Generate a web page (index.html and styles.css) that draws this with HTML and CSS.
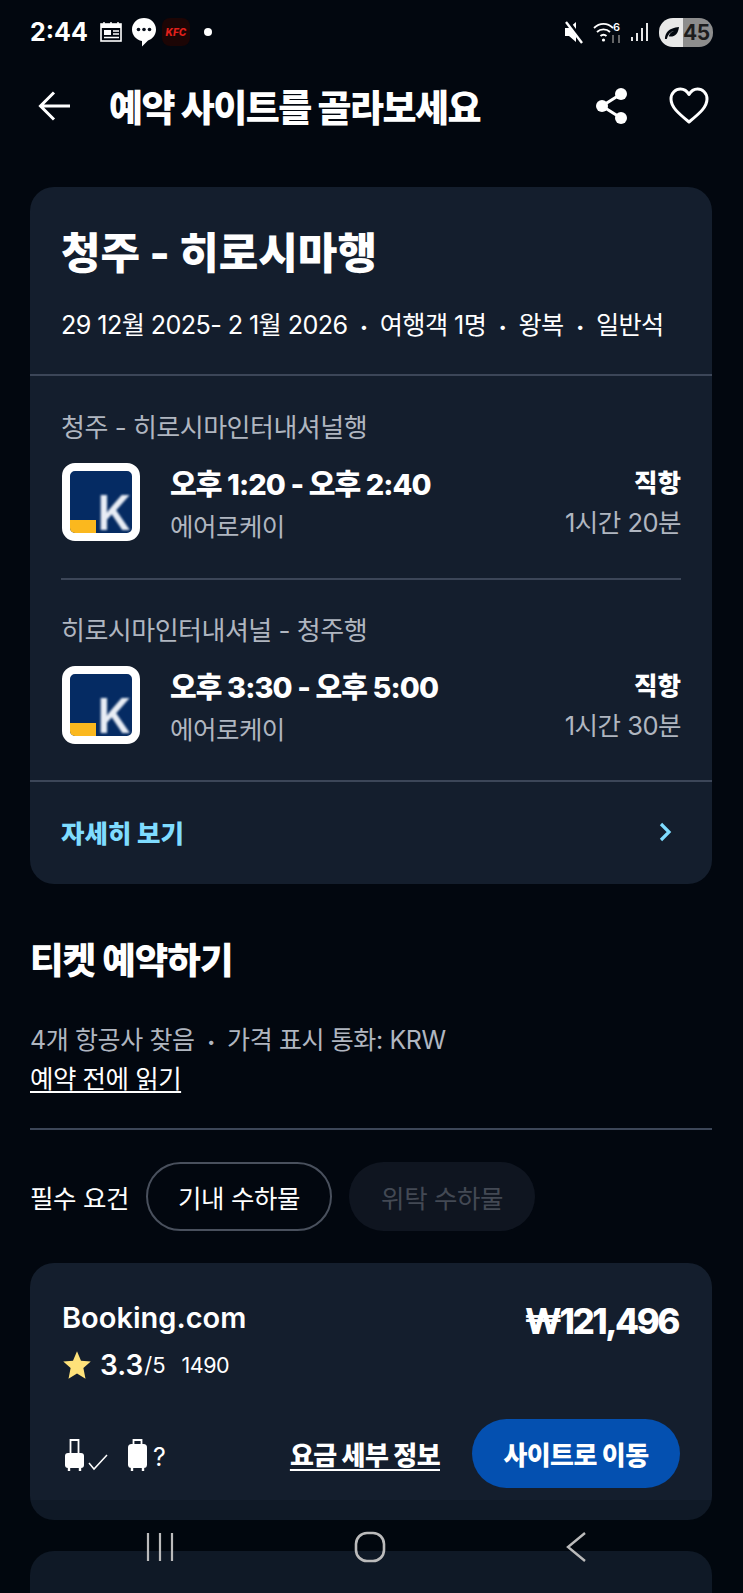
FILE: index.html
```html
<!DOCTYPE html>
<html lang="ko">
<head>
  <meta charset="utf-8">
  <title>예약 사이트를 골라보세요</title>
  <link rel="stylesheet" href="styles.css">
</head>
<body>
  <div class="screen">
    <div class="status-bar">
      <div class="status-left">
        <span class="clock">2:44</span>
        <svg class="ic-news" width="24" height="22" viewBox="0 0 24 22"><rect x="2" y="3" width="20" height="17" fill="none" stroke="#fff" stroke-width="1.6"/><rect x="2" y="3" width="20" height="4" fill="#fff"/><path d="M5 1v3M12 1v3M19 1v3" stroke="#fff" stroke-width="1.400"/><rect x="5" y="9" width="7" height="5" fill="#fff"/><path d="M14 10h6M14 13h6M5 16.500h15" stroke="#fff" stroke-width="1.400"/></svg>
        <svg class="ic-talk" width="26" height="34" viewBox="0 0 26 34"><path d="M13 3c6.500 0 12 4.800 12 11.500 0 5.500-3.500 9.500-8 11l-6 6v-5.500C5 25 1 20 1 14.500 1 7.800 6.500 3 13 3z" fill="#fff"/><circle cx="7.500" cy="14.500" r="1.800" fill="#0a101c"/><circle cx="13" cy="14.500" r="1.800" fill="#0a101c"/><circle cx="18.500" cy="14.500" r="1.800" fill="#0a101c"/></svg>
        <span class="kfc">KFC</span>
        <span class="dot"></span>
      </div>
      <div class="status-right">
        <svg class="ic-mute" width="22" height="26" viewBox="0 0 22 26"><path d="M2 9h4l7-6v20l-7-6H2z" fill="#fff"/><path d="M5 3l15 20" stroke="#02070f" stroke-width="4.500"/><path d="M3 3l16 21" stroke="#fff" stroke-width="2.400"/></svg>
        <svg width="32" height="28" viewBox="0 0 32 28"><path d="M1 10c5.500-5.500 13.500-5.500 19 0M4 14c3.500-3.500 9.500-3.500 13 0M7.500 18c1.700-1.700 4.300-1.700 6 0" fill="none" stroke="#fff" stroke-width="1.800"/><circle cx="10.500" cy="22" r="1.600" fill="#fff"/><path d="M20 17v8M26 25v-8" stroke="#7d7d7d" stroke-width="1.600"/><text x="20" y="13" class="wifi-six">6</text></svg>
        <svg width="20" height="22" viewBox="0 0 20 22"><path d="M2 16v4M7 12v8M12 7v13M17 2v18" stroke="#e8e8e8" stroke-width="2"/></svg>
        <div class="battery">
          <svg width="17" height="15" viewBox="0 0 18 16"><path d="M2 15c0-7 4-12 15-13-1 8-5 11-11 10 1-3 3-5 6-6-4 1-7 4-8 9z" fill="#02070f"/></svg>
          <span>45</span>
        </div>
      </div>
    </div>

    <header class="app-bar">
      <svg width="36" height="36" viewBox="0 0 36 36"><path d="M33 18H4M17 4.500L3.500 18 17 31.500" fill="none" stroke="#fff" stroke-width="3"/></svg>
      <h1>예약 사이트를 골라보세요</h1>
      <svg class="ic-share" width="36" height="38" viewBox="0 0 36 38"><circle cx="27" cy="7" r="6" fill="#fff"/><circle cx="8" cy="19" r="6" fill="#fff"/><circle cx="27" cy="31" r="6" fill="#fff"/><path d="M27 7L8 19l19 12" fill="none" stroke="#fff" stroke-width="3"/></svg>
      <svg class="ic-heart" width="40" height="38" viewBox="0 0 40 38"><path d="M20 35C9 26 2 20 2 12 2 6 6.500 2 11.500 2c3.500 0 6.500 2 8.500 5.500C22 4 25 2 28.500 2 33.500 2 38 6 38 12c0 8-7 14-18 23z" fill="none" stroke="#fff" stroke-width="3" stroke-linejoin="round"/></svg>
    </header>

    <main class="content">
      <section class="card trip">
        <div class="trip-head">
          <h2>청주 - 히로시마행</h2>
          <p class="trip-meta">
            <span>29 12월 2025- 2 1월 2026</span><span class="sep">•</span><span>여행객 1명</span><span class="sep">•</span><span>왕복</span><span class="sep">•</span><span>일반석</span>
          </p>
        </div>
        <div class="legs">
          <div class="leg leg-out">
            <div class="leg-name">청주 - 히로시마인터내셔널행</div>
            <div class="leg-row">
              <div class="airline-logo"><span class="logo-bar"></span><span class="logo-k">K</span></div>
              <div class="leg-info">
                <div class="leg-time">오후 1:20 - 오후 2:40</div>
                <div class="leg-sub">에어로케이</div>
              </div>
              <div class="leg-stop">
                <div class="leg-direct">직항</div>
                <div class="leg-sub">1시간 20분</div>
              </div>
            </div>
          </div>
          <div class="leg leg-back">
            <div class="leg-name">히로시마인터내셔널 - 청주행</div>
            <div class="leg-row">
              <div class="airline-logo"><span class="logo-bar"></span><span class="logo-k">K</span></div>
              <div class="leg-info">
                <div class="leg-time">오후 3:30 - 오후 5:00</div>
                <div class="leg-sub">에어로케이</div>
              </div>
              <div class="leg-stop">
                <div class="leg-direct">직항</div>
                <div class="leg-sub">1시간 30분</div>
              </div>
            </div>
          </div>
        </div>
        <div class="trip-more">
          <span>자세히 보기</span>
          <svg width="16" height="22" viewBox="0 0 16 22"><path d="M3 3l8 8-8 8" fill="none" stroke="#7fdcff" stroke-width="3.200"/></svg>
        </div>
      </section>

      <section class="booking">
        <h2>티켓 예약하기</h2>
        <p class="found">4개 항공사 찾음<span class="sep">•</span>가격 표시 통화: KRW</p>
        <a class="read-first">예약 전에 읽기</a>
      </section>

      <div class="filters">
        <span class="filter-label">필수 요건</span>
        <span class="chip">기내 수하물</span>
        <span class="chip chip-off">위탁 수하물</span>
      </div>

      <section class="card offer">
        <div class="offer-top">
          <div>
            <div class="offer-name">Booking.com</div>
            <div class="offer-rating">
              <svg width="30" height="30" viewBox="0 0 24 24"><path d="M12 1l3.200 7.500 7.800.7-5.900 5.200L18.800 23 12 18.800 5.200 23l1.700-8.600L1 9.200l7.800-.7z" fill="#ffe27a"/></svg>
              <b>3.3</b><span class="out-of">/5</span><span class="count">1490</span>
            </div>
          </div>
          <div class="offer-price">₩121,496</div>
        </div>
        <div class="offer-bottom">
          <div class="bags">
            <svg width="46" height="34" viewBox="0 0 46 34"><path d="M7.500 15V2h8v13" fill="none" stroke="#fff" stroke-width="1.800"/><rect x="2" y="15" width="19" height="15" rx="3" fill="#fff"/><path d="M6 29v4M17 29v4" stroke="#fff" stroke-width="2.400"/><path d="M26 25l5 6 13-14" fill="none" stroke="#fff" stroke-width="1.500"/></svg>
            <div class="bag-item">
              <svg width="21" height="34" viewBox="0 0 21 34"><path d="M6.500 6V2h8v4" fill="none" stroke="#fff" stroke-width="1.800"/><rect x="1" y="6" width="19" height="24" rx="3.500" fill="#fff"/><path d="M5 29v4M16 29v4" stroke="#fff" stroke-width="2.400"/></svg>
              <span class="bag-unknown">?</span>
            </div>
          </div>
          <a class="fare-link">요금 세부 정보</a>
          <span class="go-btn">사이트로 이동</span>
        </div>
      </section>

      <section class="card offer-next"></section>
    </main>

    <nav class="nav-bar">
      <svg width="28" height="30" viewBox="0 0 28 30"><path d="M2 1v28M14 1v28M26 1v28" stroke="#bbb" stroke-width="2.200"/></svg>
      <svg width="32" height="32" viewBox="0 0 32 32"><rect x="2" y="2" width="28" height="28" rx="11" fill="none" stroke="#bbb" stroke-width="2.600"/></svg>
      <svg width="22" height="32" viewBox="0 0 22 32"><path d="M20 2L3 16l17 14" fill="none" stroke="#bbb" stroke-width="2.400"/></svg>
    </nav>
  </div>
</body>
</html>
```

FILE: styles.css
```css
* {
  box-sizing: border-box;
}

html, body {
  margin: 0;
  padding: 0;
  background: #02070f;
}

body {
  font-family: "Inter", "Noto Sans CJK KR", sans-serif;
  color: #fff;
}

.screen {
  position: relative;
  width: 743px;
  height: 1593px;
  overflow: hidden;
}

/* status bar */
.status-bar {
  height: 64px;
  padding: 0 30px;
  display: flex;
  justify-content: space-between;
  align-items: center;
}

.status-left, .status-right {
  display: flex;
  align-items: center;
}

.status-right {
  gap: 5px;
}

.clock {
  margin-right: 11px;
  font-size: 25px;
  font-weight: 700;
}

.ic-talk {
  margin-left: 8px;
}

.ic-mute {
  margin-right: 3px;
}

.kfc {
  width: 28px;
  height: 28px;
  margin-left: 5px;
  border-radius: 8px;
  background: #1c0505;
  color: #e3201b;
  font-size: 10px;
  font-weight: 800;
  font-style: italic;
  line-height: 28px;
  text-align: center;
}

.dot {
  width: 8px;
  height: 8px;
  margin-left: 14px;
  border-radius: 50%;
  background: #fff;
}

.wifi-six {
  fill: #fff;
  font-size: 11px;
  font-weight: 600;
}

.battery {
  width: 54px;
  height: 29px;
  margin-left: 4px;
  padding-left: 4px;
  display: flex;
  align-items: center;
  gap: 3px;
  border-radius: 14px;
  background: linear-gradient(90deg, #e8e8e8 0 44%, #8d8d8d 44%);
  color: #1d1d1d;
  font-size: 21px;
  font-weight: 700;
  letter-spacing: -0.5px;
}

/* app bar */
.app-bar {
  height: 84px;
  padding: 0 34px 0 37px;
  display: flex;
  align-items: center;
}

.app-bar h1 {
  flex: 1;
  margin: 0 0 0 36px;
  font-size: 37px;
  font-weight: 800;
  letter-spacing: -1.500px;
  white-space: nowrap;
}

.ic-share {
  margin-right: 39px;
}

/* main */
.content {
  padding: 39px 31px 0 30px;
}

.card {
  border-radius: 24px;
  background: #141e2d;
}

.trip {
  height: 697px;
}

.trip-head {
  height: 189px;
  padding: 32px 31px 0;
  border-bottom: 2px solid #3c4658;
}

.trip-head h2 {
  margin: 0;
  font-size: 43px;
  line-height: 68px;
  font-weight: 800;
}

.trip-meta {
  margin: 22px 0 0;
  font-size: 25.200px;
  line-height: 32px;
  letter-spacing: -0.6px;
  white-space: nowrap;
}

.sep {
  margin: 0 12.500px;
  font-size: 14px;
  vertical-align: 2px;
}

.legs {
  height: 406px;
  padding: 0 31px;
  border-bottom: 2px solid #3c4658;
}

.leg {
  padding-top: 33px;
}

.leg-out {
  height: 202px;
  padding-top: 34px;
}

.leg-back {
  height: 204px;
  border-top: 2px solid #3c4658;
}

.leg-name {
  color: #b0b6c0;
  font-size: 26px;
  line-height: 36px;
  letter-spacing: -0.5px;
}

.leg-row {
  height: 78px;
  margin-top: 17px;
  display: flex;
  align-items: center;
}

.airline-logo {
  position: relative;
  flex: none;
  width: 78px;
  height: 78px;
  margin-left: 1px;
  border: 8px solid #fff;
  border-radius: 13px;
  background: #052b63;
  overflow: hidden;
}

.logo-bar {
  position: absolute;
  left: 0;
  bottom: 0;
  width: 26px;
  height: 13px;
  background: #fbb81e;
}

.logo-k {
  position: absolute;
  left: 26px;
  bottom: 0;
  width: 36px;
  height: 40px;
  color: #e8edf5;
  font-size: 48px;
  line-height: 40px;
  font-weight: 600;
  text-align: center;
  filter: blur(0.8px);
}

.leg-info {
  flex: 1;
  margin-left: 30px;
  padding-top: 7px;
}

.leg-time {
  font-size: 29px;
  font-weight: 800;
  line-height: 42px;
  letter-spacing: -0.9px;
  white-space: nowrap;
}

.leg-sub {
  color: #b0b6c0;
  font-size: 25.500px;
  line-height: 42px;
  letter-spacing: -0.5px;
  white-space: nowrap;
}

.leg-stop {
  text-align: right;
}

.leg-stop .leg-sub {
  line-height: 38px;
}

.leg-direct {
  font-size: 25.500px;
  font-weight: 800;
  line-height: 42px;
}

.trip-more {
  height: 99px;
  padding: 0 38px 0 31px;
  display: flex;
  justify-content: space-between;
  align-items: center;
  color: #7fdcff;
  font-size: 25.500px;
  font-weight: 800;
}

/* booking */
.booking {
  margin-top: 52px;
  padding-bottom: 33px;
  border-bottom: 2px solid #3c4658;
}

.booking h2 {
  margin: 0;
  font-size: 36.500px;
  line-height: 50px;
  font-weight: 800;
  letter-spacing: -1px;
}

.found {
  margin: 36px 0 0;
  color: #b0b6c0;
  font-size: 25px;
  line-height: 36px;
  letter-spacing: -0.4px;
}

.read-first {
  display: inline-block;
  margin-top: 3px;
  font-size: 25.500px;
  line-height: 32px;
  letter-spacing: -0.5px;
  text-decoration: underline;
  text-underline-offset: 3px;
}

.filters {
  margin-top: 32px;
  display: flex;
  align-items: center;
}

.filter-label {
  font-size: 25.500px;
  letter-spacing: -0.4px;
}

.chip {
  height: 69px;
  margin-left: 17px;
  padding: 0 30px;
  display: flex;
  align-items: center;
  border: 2px solid #49505d;
  border-radius: 35px;
  font-size: 25.500px;
  letter-spacing: -0.4px;
}

.chip-off {
  padding: 0 32px;
  border: none;
  background: #0f1520;
  color: #434954;
}

/* offers */
.offer {
  height: 257px;
  margin-top: 32px;
  padding: 38px 32px 0;
}

.offer-top {
  height: 118px;
  display: flex;
  justify-content: space-between;
}

.offer-name {
  font-size: 29px;
  font-weight: 600;
  line-height: 34px;
}

.offer-rating {
  margin-top: 13px;
  display: flex;
  align-items: center;
}

.offer-rating b {
  margin-left: 8px;
  font-size: 28px;
  font-weight: 600;
}

.out-of {
  margin-left: 1px;
  font-size: 22px;
}

.count {
  margin-left: 16px;
  font-size: 21.500px;
  letter-spacing: -0.5px;
}

.offer-price {
  margin-right: 2px;
  font-size: 35px;
  font-weight: 800;
  letter-spacing: -2.500px;
  line-height: 40px;
}

.offer-bottom {
  display: flex;
  align-items: center;
}

.bags {
  flex: 1;
  display: flex;
  gap: 18px;
  padding: 3px 0 0 1px;
}

.bag-item {
  display: flex;
  align-items: flex-end;
  gap: 5px;
}

.bag-unknown {
  font-size: 25px;
  line-height: 30px;
}

.fare-link {
  margin-right: 32px;
  font-size: 26px;
  font-weight: 800;
  letter-spacing: -0.6px;
  text-decoration: underline;
  text-underline-offset: 4px;
}

.go-btn {
  width: 208px;
  height: 69px;
  display: flex;
  justify-content: center;
  align-items: center;
  border-radius: 35px;
  background: #0450b0;
  font-size: 26px;
  font-weight: 800;
  letter-spacing: -0.6px;
}

.offer-next {
  height: 120px;
  margin-top: 31px;
}

/* nav bar sits over the scrolling page */
.nav-bar {
  position: absolute;
  left: 0;
  right: 0;
  bottom: 0;
  height: 93px;
  padding: 0 156px 0 146px;
  display: flex;
  justify-content: space-between;
  align-items: center;
  background: rgba(2, 7, 15, 0.22);
}
```
